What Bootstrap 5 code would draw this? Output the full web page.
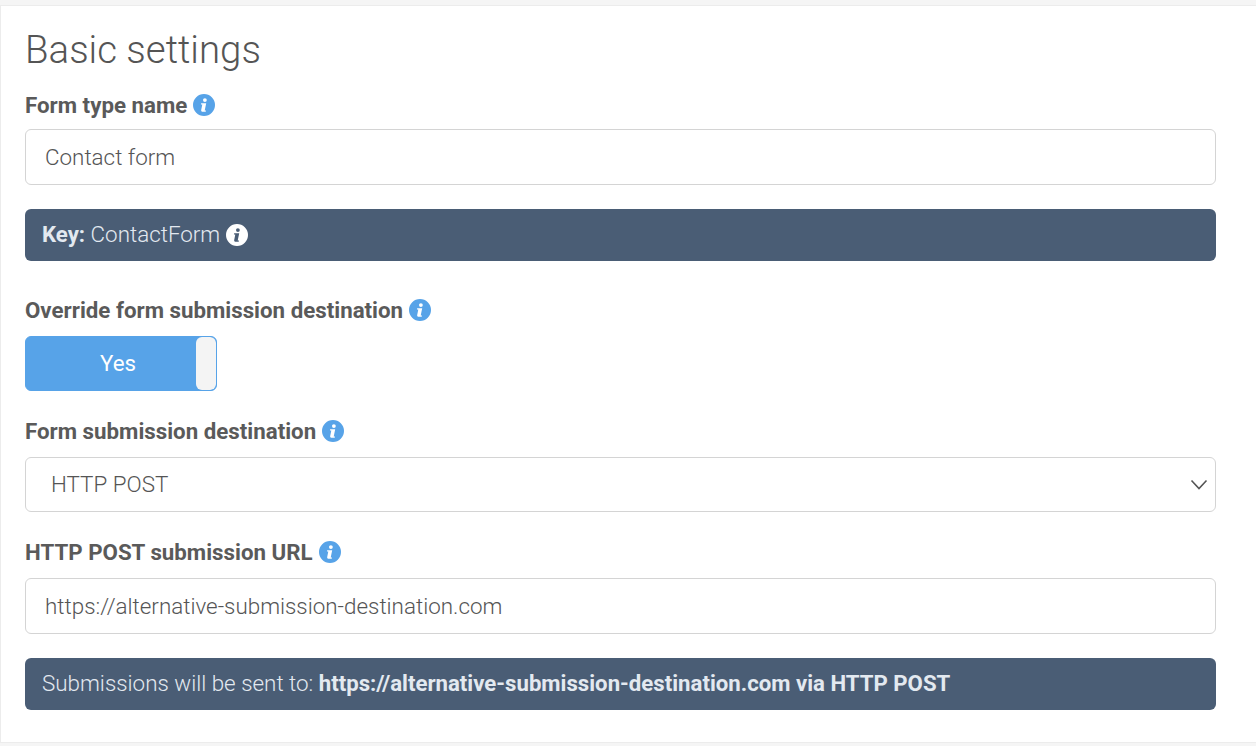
<!DOCTYPE html>
<html lang="en">
<head>
    <meta charset="UTF-8">
    <meta name="viewport" content="width=device-width, initial-scale=1.0">
    <title>Basic settings</title>
    <link href="https://cdn.jsdelivr.net/npm/bootstrap@5.3.0/dist/css/bootstrap.min.css" rel="stylesheet">
    <style>
        body { background: #f5f5f5; font-family: Roboto, "Liberation Sans", sans-serif; color: #555; font-weight: 300; overflow: hidden; }
        .settings-card { margin: 5px 0 0 0; height: 738px; width: 1256px; border: 1px solid #ececec; border-right: 0; border-radius: 0; background: #fff; padding: 23px 40px 0 24px; color: #555; }
        .settings-title { font-size: 38.4px; font-weight: 300; line-height: 42px; margin: 0 0 19px 0; color: #555; }
        .field-label { font-size: 22.3px; font-weight: 700; line-height: 30px; margin: 0 0 11px 0; color: #5a5a5a; display: flex; align-items: center; gap: 6px; }
        .field-label.first-label { margin-bottom: 9px; }
        .override-label { margin-top: 34px; }
        .url-label { margin-top: 25px; }
        .info-icon { width: 22px; height: 22px; flex: none; color: #fff; }
        .icon-blue { color: #57a3e8; }
        .field-input { height: 56px; font-size: 22.4px; font-weight: 300; color: #555; border: 1px solid #d4d4d4; border-radius: 6px; padding: 0 19px; font-family: inherit; }
        .field-select { height: 55px; font-size: 22.4px; font-weight: 300; color: #555; border: 1px solid #d4d4d4; border-radius: 6px; padding: 0 25px; font-family: inherit; background-size: 18px 12px; background-position: right 7px center; background-image: url("data:image/svg+xml,%3csvg xmlns='http://www.w3.org/2000/svg' viewBox='0 0 18 12'%3e%3cpath fill='none' stroke='%23555' stroke-width='1.6' d='M1.500 1.500L9 9.500l7.500-8'/%3e%3c/svg%3e"); }
        .info-strip { background: #4a5d75; color: #e3e9f0; border: 0; border-radius: 6px; height: 52px; padding: 0 17px; font-size: 22.4px; font-weight: 300; display: flex; align-items: center; gap: 6px; margin: 24px 0 0 0; }
        .info-strip strong { font-weight: 700; font-size: 22.2px; }
        .yes-toggle { width: 192px; height: 55px; background: #57a3e8; border: 1px solid #57a3e8; border-radius: 6px; margin: 0 0 25px 0; display: flex; color: #fff; font-size: 22.3px; font-weight: 400; overflow: hidden; }
        .yes-label { flex: 1; display: flex; align-items: center; justify-content: center; padding-left: 14px; }
        .yes-knob { width: 20px; background: #f4f4f4; border-radius: 6px; }
    </style>
</head>
<body>
    <svg width="0" height="0" class="d-block position-absolute">
        <symbol id="info-glyph" viewBox="0 0 22 22">
            <path fill="currentColor" fill-rule="evenodd" d="M11 0a11 11 0 1 1 0 22a11 11 0 0 1 0-22zM11.900 4.200a1.900 1.900 0 1 0 0 3.800a1.900 1.900 0 0 0 0-3.800zM8.200 9.200l-.3 1.200h1.400l-1.100 5.600c-.2 1.200.4 1.800 1.500 1.800h3l.3-1.200h-1.300l1.500-7.400z"/>
        </symbol>
    </svg>
    <div class="card settings-card">
        <h1 class="settings-title">Basic settings</h1>

        <label class="field-label first-label">Form type name <svg class="info-icon icon-blue"><use href="#info-glyph"/></svg></label>
        <input type="text" class="form-control field-input" value="Contact form">

        <div class="alert info-strip"><span><strong>Key:</strong> ContactForm</span> <svg class="info-icon"><use href="#info-glyph"/></svg></div>

        <label class="field-label override-label">Override form submission destination <svg class="info-icon icon-blue"><use href="#info-glyph"/></svg></label>
        <div class="yes-toggle">
            <div class="yes-label">Yes</div>
            <div class="yes-knob"></div>
        </div>

        <label class="field-label">Form submission destination <svg class="info-icon icon-blue"><use href="#info-glyph"/></svg></label>
        <select class="form-select field-select">
            <option>HTTP POST</option>
        </select>

        <label class="field-label url-label">HTTP POST submission URL <svg class="info-icon icon-blue"><use href="#info-glyph"/></svg></label>
        <input type="text" class="form-control field-input" value="https://alternative-submission-destination.com">

        <div class="alert info-strip"><span>Submissions will be sent to: <strong>https://alternative-submission-destination.com via HTTP POST</strong></span></div>
    </div>
    <script src="https://cdn.jsdelivr.net/npm/bootstrap@5.3.0/dist/js/bootstrap.bundle.min.js"></script>
</body>
</html>
